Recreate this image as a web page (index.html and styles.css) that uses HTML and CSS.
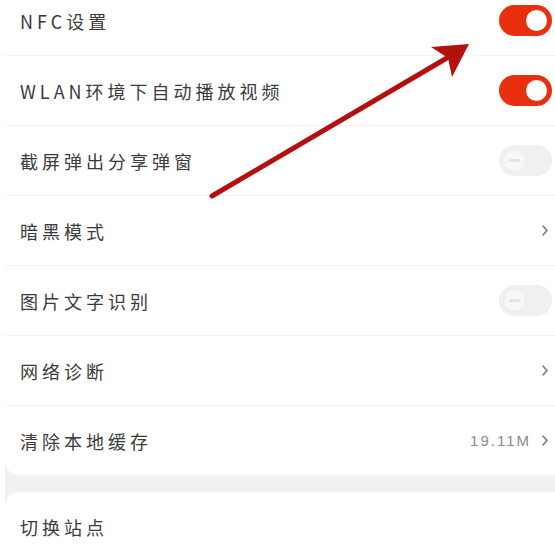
FILE: index.html
```html
<!DOCTYPE html>
<html lang="zh-CN">
<head>
    <meta charset="UTF-8">
    <title>设置</title>
    <link rel="stylesheet" href="styles.css">
</head>
<body>
<div class="page">
    <div class="group first">
        <div class="row">
            <span class="label">NFC设置</span>
            <span class="switch on"><i></i></span>
        </div>
        <div class="row">
            <span class="label">WLAN环境下自动播放视频</span>
            <span class="switch on"><i></i></span>
        </div>
        <div class="row">
            <span class="label">截屏弹出分享弹窗</span>
            <span class="switch off"><i></i></span>
        </div>
        <div class="row">
            <span class="label">暗黑模式</span>
            <span class="more">
                <svg class="arrow" width="8" height="13" viewBox="0 0 8 13"><path d="M2 2l4 4.5-4 4.5" fill="none" stroke="#7a7a7a" stroke-width="1.6" stroke-linecap="round" stroke-linejoin="round"/></svg>
            </span>
        </div>
        <div class="row">
            <span class="label">图片文字识别</span>
            <span class="switch off"><i></i></span>
        </div>
        <div class="row">
            <span class="label">网络诊断</span>
            <span class="more">
                <svg class="arrow" width="8" height="13" viewBox="0 0 8 13"><path d="M2 2l4 4.5-4 4.5" fill="none" stroke="#7a7a7a" stroke-width="1.6" stroke-linecap="round" stroke-linejoin="round"/></svg>
            </span>
        </div>
        <div class="row">
            <span class="label">清除本地缓存</span>
            <span class="more">
                <em class="value">19.11M</em>
                <svg class="arrow" width="8" height="13" viewBox="0 0 8 13"><path d="M2 2l4 4.5-4 4.5" fill="none" stroke="#7a7a7a" stroke-width="1.6" stroke-linecap="round" stroke-linejoin="round"/></svg>
            </span>
        </div>
    </div>
    <div class="group">
        <div class="row">
            <span class="label">切换站点</span>
        </div>
    </div>
</div>
<!-- 标注箭头 -->
<svg class="mark" width="555" height="547" viewBox="0 0 555 547">
    <line x1="212" y1="196" x2="452" y2="55" stroke="#b3110f" stroke-width="5" stroke-linecap="round"/>
    <polygon points="469,44 431,47 448,58 452,77" fill="#b3110f"/>
</svg>
</body>
</html>
```

FILE: styles.css
```css
*{
    margin: 0;
    padding: 0;
    box-sizing: border-box;
}
body{
    margin: 0;
    height: 547px;
    background-color: #fff;
    font-family: "Noto Sans CJK SC", "Noto Sans", sans-serif;
    overflow: hidden;
}
.page{
    margin: -14px -20px 0 5px;
    background-color: #f1f1f1;
    height: 560px;
}
.group{
    background-color: #fff;
    border-radius: 14px;
}
.group.first{
    border-radius: 0 0 14px 14px;
    margin-bottom: 17px;
}
.row{
    display: flex;
    align-items: center;
    justify-content: space-between;
    height: 70px;
    padding: 0 23px 0 15px;
    border-bottom: 1px solid #f3f3f3;
}
.row:last-child{
    border-bottom: none;
    height: 69px;
}
.label{
    font-size: 18px;
    color: #3b3b3b;
    letter-spacing: 4px;
}
.switch{
    position: relative;
    width: 53px;
    height: 31px;
    border-radius: 16px;
    background-color: #e8300f;
}
.switch i{
    position: absolute;
    top: 5px;
    right: 5px;
    width: 21px;
    height: 21px;
    border-radius: 50%;
    background-color: #fff;
}
.switch.off{
    background-color: #f0f0f0;
}
.switch.off i{
    left: 5px;
    right: auto;
    background-color: #f7f7f7;
    box-shadow: 0 0 2px #e6e6e6;
}
.switch.off i::after{        /*减号*/
    content: "";
    position: absolute;
    left: 5px;
    top: 9px;
    width: 11px;
    height: 3px;
    border-radius: 2px;
    background-color: #e2e2e2;
}
.more{
    display: flex;
    align-items: center;
    color: #8a8a8a;
    margin-right: 3px;
}
.value{
    font-style: normal;
    font-size: 15px;
    letter-spacing: 2px;
    margin-right: 10px;
    font-family: "Liberation Sans", sans-serif;
}
.arrow{
    display: block;
}
.mark{
    position: absolute;
    left: 0;
    top: 0;
    pointer-events: none;
}
```
